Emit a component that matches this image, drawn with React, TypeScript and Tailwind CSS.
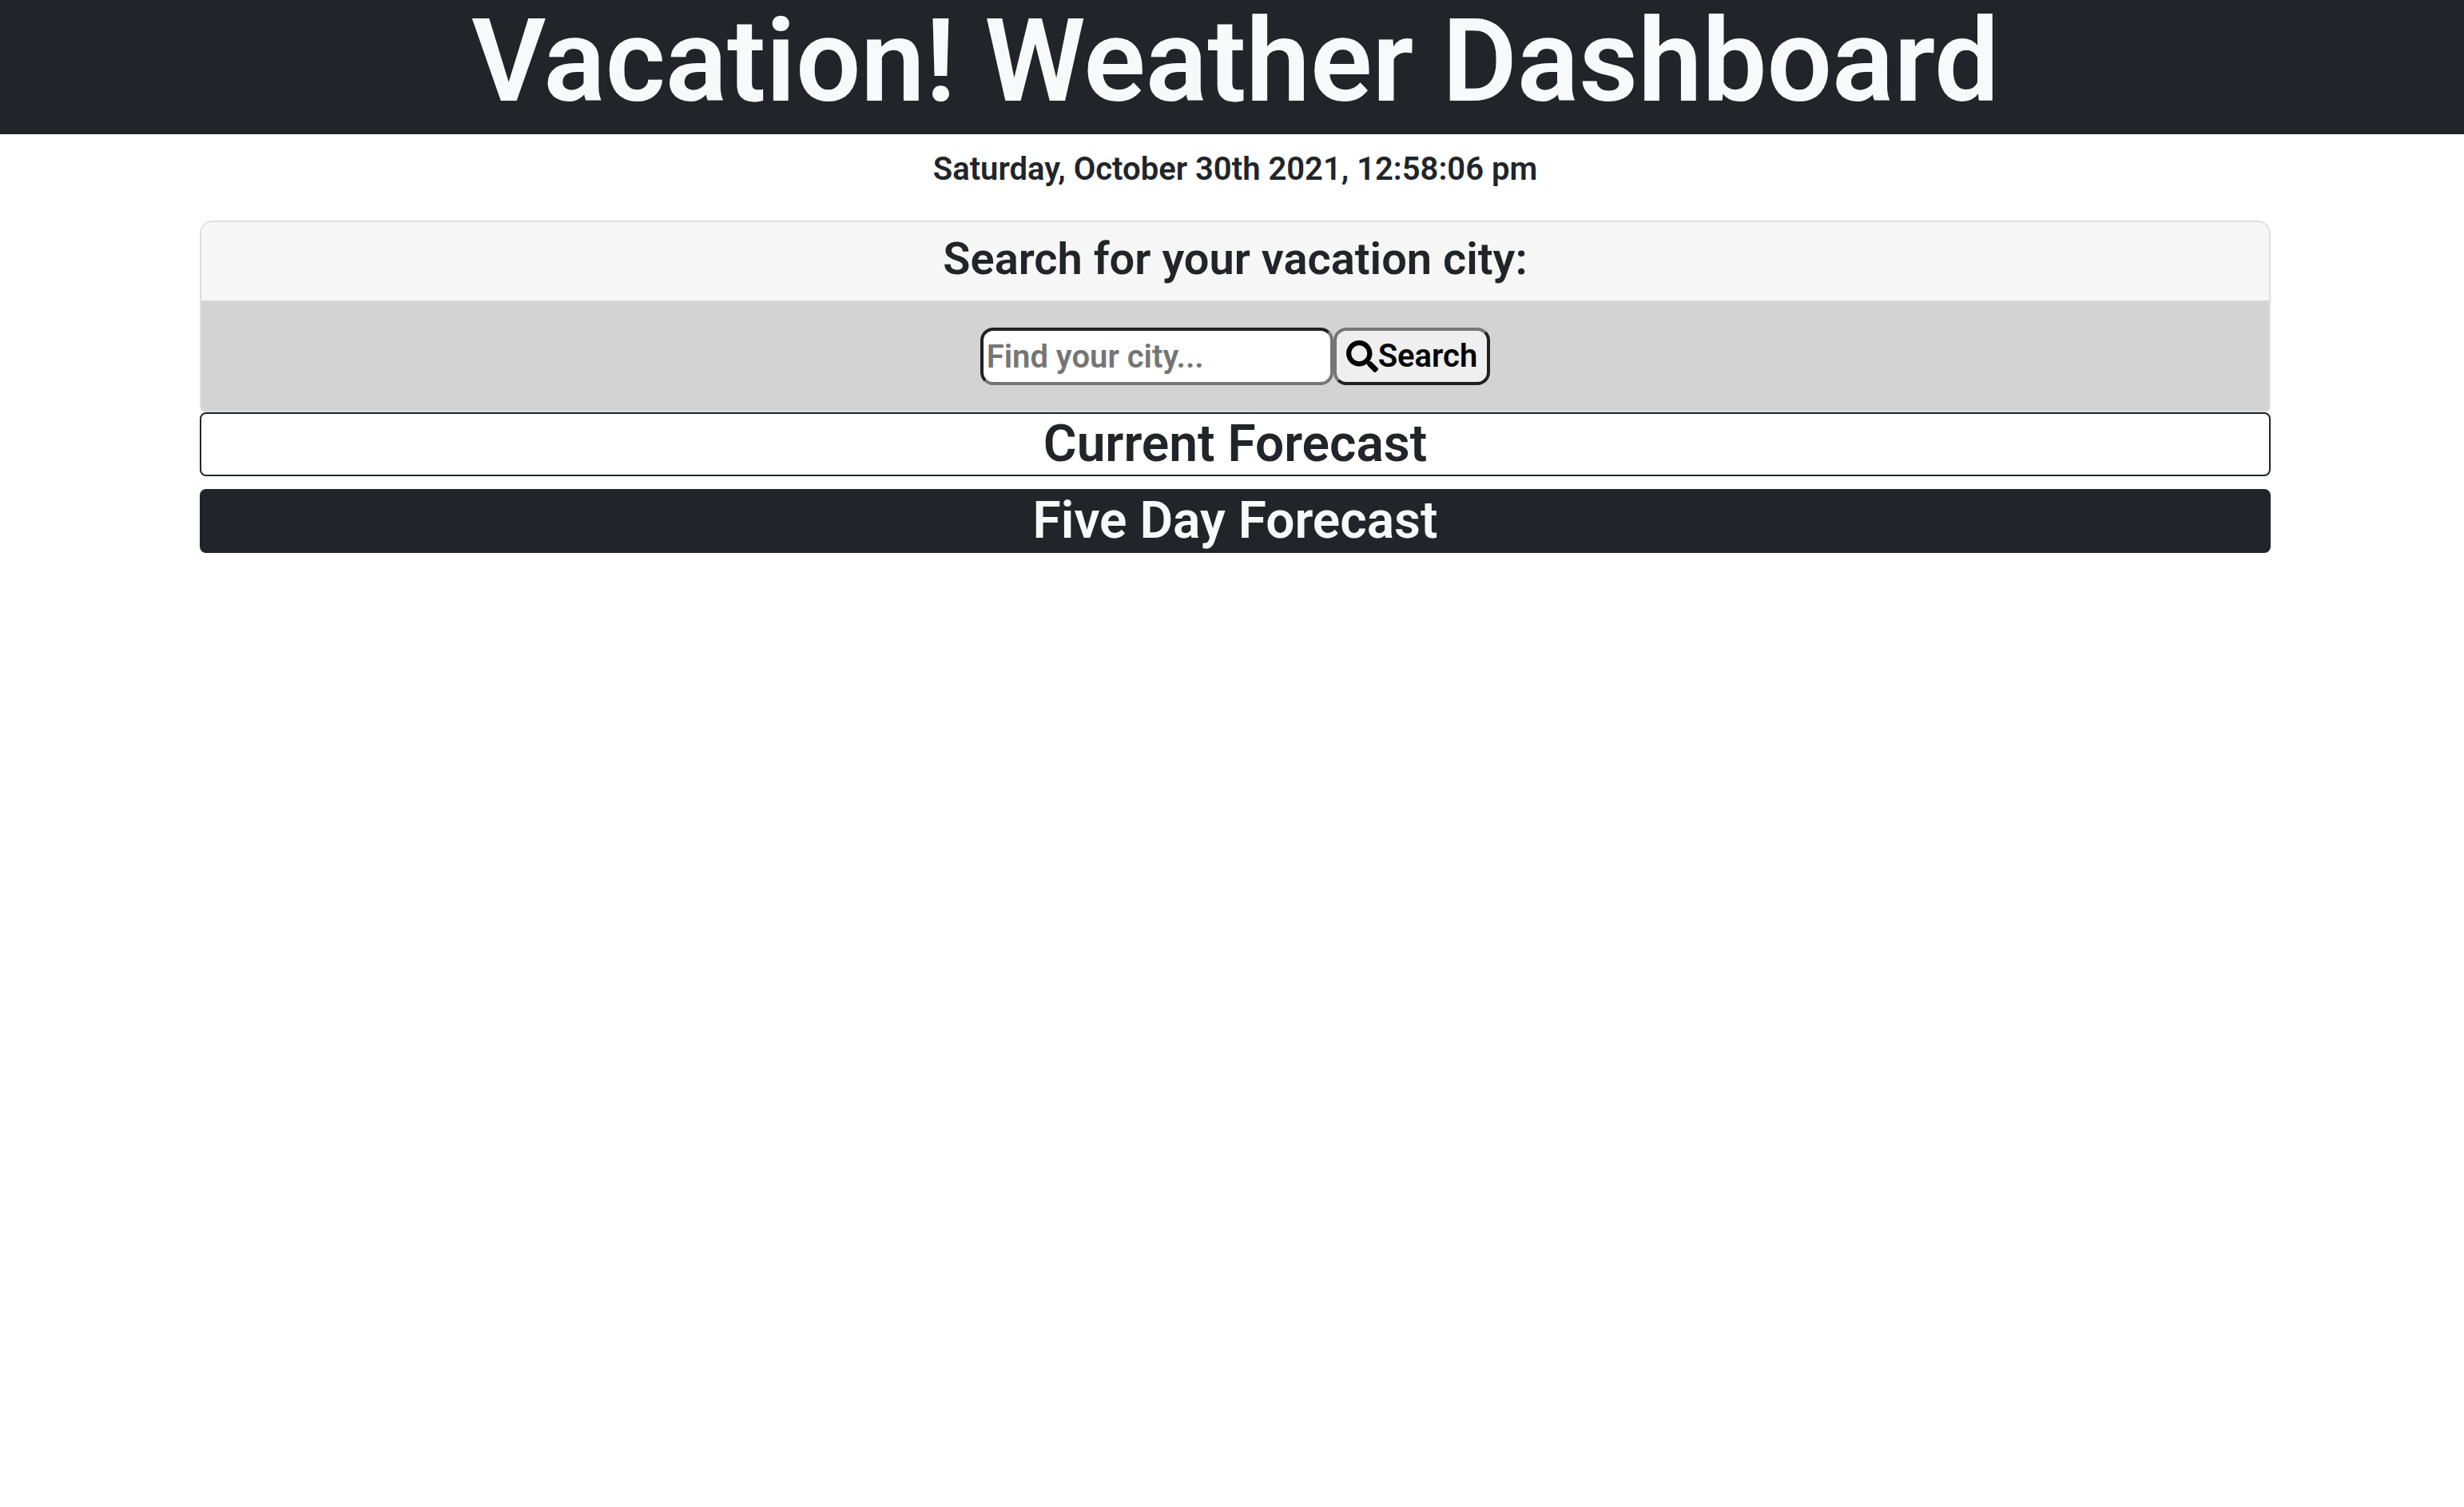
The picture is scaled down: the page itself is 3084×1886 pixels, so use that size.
import { FaSearch } from "react-icons/fa";

export default function App() {
  return (
    <div className="min-h-screen bg-white font-['Roboto',sans-serif] text-[40px] font-semibold text-[#212529]">
      <header className="bg-[#212529] pb-3.5 pl-2 text-center">
        <h1 className="text-[144px] leading-[154px] text-[#f8f9fa]">Vacation! Weather Dashboard</h1>
      </header>
      <p className="pt-3.5 pl-2 text-center text-[40px] leading-[60px]">Saturday, October 30th 2021, 12:58:06 pm</p>
      <main className="mr-[242px] ml-[250px] pt-[34px]">
        <section className="rounded-t-2xl rounded-b-lg border-2 border-black/[0.125]">
          <h2 className="rounded-t-[14px] border-b-2 border-[#d7d7d7] bg-[#f7f7f7] pt-3.5 pb-5 text-center text-[56px] leading-[64px]">
            <label htmlFor="city">Search for your vacation city:</label>
          </h2>
          <form className="flex justify-center bg-[#d3d3d3] py-8" onSubmit={(e) => e.preventDefault()}>
            <input
              id="city"
              type="text"
              placeholder="Find your city..."
              className="h-[72px] w-[442px] rounded-2xl border-4 border-t-[#212121] border-r-[#767676] border-b-[#767676] border-l-[#212121] bg-white px-1 placeholder:text-[#757575]"
            />
            <button
              type="submit"
              className="flex h-[72px] items-center rounded-2xl border-4 border-t-[#767676] border-r-[#212121] border-b-[#212121] border-l-[#767676] bg-[#efefef] px-3 text-black"
            >
              <FaSearch />
              Search
            </button>
          </form>
        </section>
        <h2 className="rounded-lg border-2 border-[#212529] text-center text-[64px] leading-[76px]">Current Forecast</h2>
        <h2 className="mt-4 rounded-lg border-2 border-[#212529] bg-[#212529] text-center text-[64px] leading-[76px] text-[#f8f9fa]">
          Five Day Forecast
        </h2>
      </main>
    </div>
  );
}
